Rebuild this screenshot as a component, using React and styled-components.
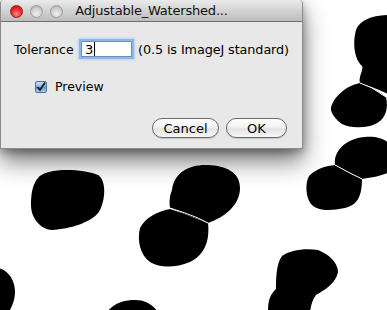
import React from "react";
import styled, { createGlobalStyle } from "styled-components";

const GlobalStyle = createGlobalStyle`
  html, body {
    margin: 0;
    padding: 0;
    background: #ffffff;
  }
  body {
    font-family: "DejaVu Sans", "Liberation Sans", sans-serif;
  }
`;

const Desktop = styled.div`
  position: relative;
  width: 387px;
  height: 310px;
  overflow: hidden;
  background: #ffffff;
`;

const Picture = styled.svg`
  position: absolute;
  inset: 0;
  display: block;
`;

const Dialog = styled.div`
  position: absolute;
  top: 0;
  left: 0;
  width: 303px;
  height: 149px;
  box-sizing: border-box;
  display: flex;
  flex-direction: column;
  border: 1px solid #8c8c8c;
  border-top: none;
  border-radius: 4px 4px 0 0;
  background: #e8e8e8;
  box-shadow: 0 12px 24px rgba(0, 0, 0, 0.55), 0 3px 8px rgba(0, 0, 0, 0.3);
`;

const TitleBar = styled.div`
  position: relative;
  height: 22px;
  box-sizing: border-box;
  display: flex;
  align-items: center;
  justify-content: center;
  background: linear-gradient(#ebebeb, #d3d3d3 50%, #bdbdbd);
  border-bottom: 1px solid #6f6f6f;
  border-radius: 4px 4px 0 0;
`;

const Lights = styled.div`
  position: absolute;
  left: 9px;
  top: 5px;
  display: flex;
  gap: 7px;
`;

const Light = styled.span`
  width: 13px;
  height: 13px;
  border-radius: 50%;
  box-sizing: border-box;
  border: 1px solid ${(p) => (p.$red ? "#9a1c1c" : "#9c9c9c")};
  background: ${(p) =>
    p.$red
      ? "radial-gradient(circle at 50% 70%, #ff8d8d, #f02424 55%, #b40f0f)"
      : "radial-gradient(circle at 50% 70%, #f0f0f0, #cfcfcf 55%, #a9a9a9)"};
`;

const Title = styled.div`
  font-size: 13px;
  color: #111;
  letter-spacing: -0.2px;
`;

const Body = styled.div`
  flex: 1;
  display: flex;
  flex-direction: column;
  padding: 16px 10px 0 13px;
  font-size: 12.5px;
  color: #000;
  white-space: nowrap;
`;

const Row = styled.div`
  display: flex;
  align-items: center;
`;

const Label = styled.span`
  width: 67px;
`;

const Field = styled.div`
  width: 51px;
  height: 16px;
  margin: 3px 0;
  box-sizing: border-box;
  display: flex;
  align-items: center;
  padding-left: 3px;
  background: #fff;
  border: 1px solid #6e8fb8;
  box-shadow: 0 0 0 2px #8fb7e6, 0 0 2px 3px #b8d3f2;
  font-size: 13px;
`;

const Caret = styled.span`
  width: 1px;
  height: 14px;
  margin-left: 1px;
  background: #000;
`;

const Hint = styled.span`
  margin-left: 6px;
  font-size: 12.8px;
  letter-spacing: -0.1px;
`;

const CheckRow = styled(Row)`
  margin-top: 19px;
  padding-left: 21px;
  gap: 8px;
`;

const Box = styled.span`
  width: 12px;
  height: 12px;
  box-sizing: border-box;
  display: flex;
  align-items: center;
  justify-content: center;
  border: 1px solid #4c6f9d;
  border-radius: 2px;
  background: linear-gradient(#cfe3f8, #7fb0e4 50%, #5a95d6 51%, #a8d0f5);
`;

const Buttons = styled(Row)`
  margin-top: 24px;
  padding-right: 5px;
  justify-content: flex-end;
  gap: 7px;
`;

const Button = styled.button`
  width: ${(p) => p.$w}px;
  height: 20px;
  padding: 0;
  font-family: inherit;
  font-size: 13px;
  color: #000;
  border: 1px solid #6a6a6a;
  border-radius: 10px;
  background: linear-gradient(#ffffff, #f3f3f3 45%, #e2e2e2 55%, #f7f7f7);
  box-shadow: 0 1px 1px rgba(0, 0, 0, 0.15);
`;

function Cells() {
  return (
    <Picture width="387" height="310" viewBox="0 0 387 310">
      <g fill="#000">
        <path d="M38 178 C45 168, 80 168, 98 175 C106 180, 106 198, 100 210 C94 222, 70 229, 52 230 C40 229, 31 218, 31 205 C31 192, 33 184, 38 178 Z" />
        <path d="M172 190 C174 172, 190 164, 208 165 C226 166, 240 172, 240 188 C240 205, 225 217, 208 223 C195 218, 180 212, 170 208 C169 200, 170 195, 172 190 Z" />
        <path d="M170 209 C185 214, 195 218, 208 223 C210 240, 205 255, 190 262 C175 268, 160 268, 150 262 C140 255, 137 240, 140 228 C145 218, 158 211, 170 209 Z" />
        <path d="M356 30 C360 20, 372 15, 390 15 L390 95 C380 90, 370 86, 360 83 C358 76, 364 70, 362 66 C355 60, 352 45, 356 30 Z" />
        <path d="M360 83 C372 87, 380 92, 386 97 C389 110, 385 122, 370 126 C360 128, 350 128, 342 124 C336 120, 330 112, 331 108 C333 98, 345 86, 360 83 Z" />
        <path d="M335 165 C333 150, 348 138, 365 137 C378 136, 387 140, 390 145 L390 172 C382 176, 370 178, 362 179 C352 174, 344 170, 335 165 Z" />
        <path d="M335 165 C344 170, 352 174, 362 179 C362 195, 358 205, 345 208 C330 211, 318 211, 312 205 C305 198, 305 180, 310 175 C318 168, 326 166, 335 165 Z" />
        <path d="M282 256 C290 250, 305 248, 318 250 C328 254, 338 262, 338 272 C336 283, 325 290, 316 295 C312 300, 311 306, 310 312 L268 312 C268 300, 270 295, 276 289 C276 280, 276 264, 282 256 Z" />
        <path d="M-2 268 C8 270, 15 280, 15 292 C15 300, 12 306, 9 312 L-2 312 Z" />
        <path d="M107 312 C115 302, 125 300, 135 300 C145 300, 152 304, 158 312 Z" />
      </g>
      <g stroke="#fff" strokeWidth="1" fill="none">
        <path d="M170 208 L185 213 L198 218 L208 223" />
        <path d="M360 83 L372 88 L386 97" />
        <path d="M335 165 L348 172 L362 179" />
      </g>
    </Picture>
  );
}

export default function App() {
  return (
    <>
      <GlobalStyle />
      <Desktop>
        <Cells />
        <Dialog>
          <TitleBar>
            <Lights>
              <Light $red />
              <Light />
              <Light />
            </Lights>
            <Title>Adjustable_Watershed...</Title>
          </TitleBar>
          <Body>
            <Row>
              <Label>Tolerance</Label>
              <Field>
                3<Caret />
              </Field>
              <Hint>(0.5 is ImageJ standard)</Hint>
            </Row>
            <CheckRow>
              <Box>
                <svg width="10" height="10" viewBox="0 0 10 10">
                  <path d="M1.5 5 L4 8 L9 0.5" stroke="#1a1a1a" strokeWidth="1.8" fill="none" />
                </svg>
              </Box>
              <span>Preview</span>
            </CheckRow>
            <Buttons>
              <Button $w={67}>Cancel</Button>
              <Button $w={61}>OK</Button>
            </Buttons>
          </Body>
        </Dialog>
      </Desktop>
    </>
  );
}
